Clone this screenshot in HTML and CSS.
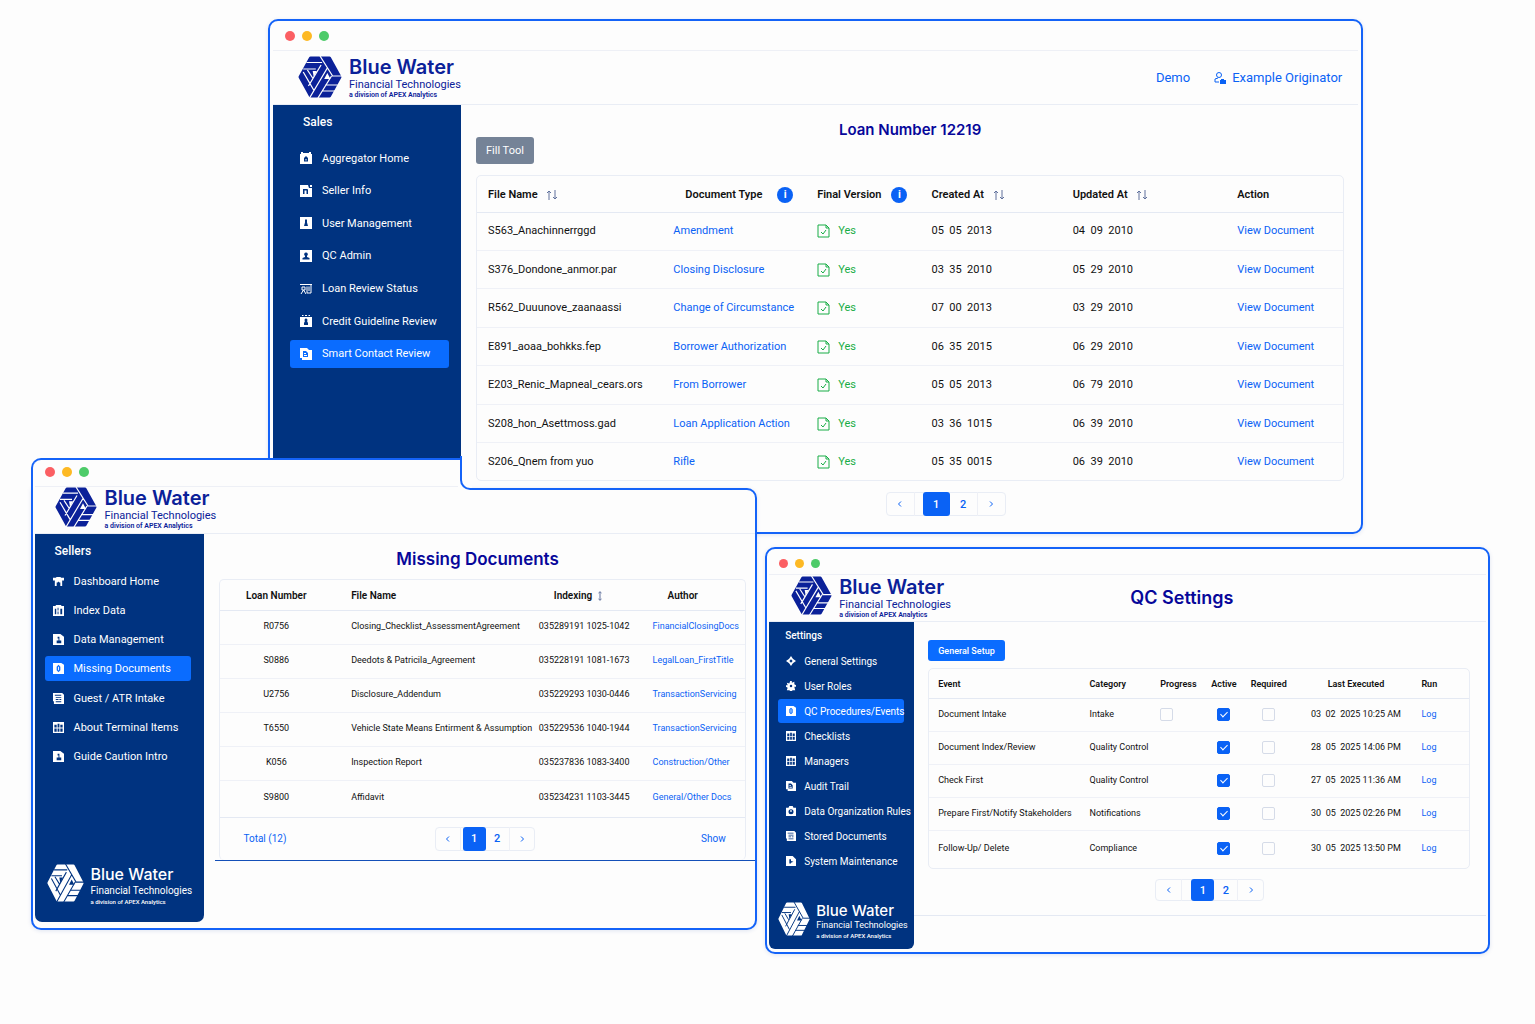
FILE: index.html
```html
<!DOCTYPE html>
<html lang="en">
<head>
    <meta charset="UTF-8">
    <meta name="viewport" content="width=device-width, initial-scale=1">
    <title>Blue Water Financial Technologies</title>
    <link rel="stylesheet" href="styles.css">
</head>
<body>
    <svg class="sprite" aria-hidden="true">
        <symbol id="mark" viewBox="0 0 42 42" preserveAspectRatio="none">
            <path class="mark-fill" d="M2 21L12 2h18l10 19-10 19H12z"/>
            <path class="mark-cut" d="M8 6.500h15M5 13h12M21 0l12 20h9M28 12L11 42M22 9L10 30M32 20L19 42M5 16l10 18M9 14l5 8M23 35h17M26 29h12"/>
            <path class="mark-hole" d="M14 15h4l-3 6zM28 17l3 6h-6z"/>
        </symbol>
        <symbol id="i-bag" viewBox="0 0 12 12"><path fill-rule="evenodd" d="M0 2h1V0h2v1h6V0h2v2h1v10H0zM4 9.500h4V6L6 4 4 6zM5.500 7h1v1.500h-1z"/></symbol>
        <symbol id="i-doc" viewBox="0 0 12 12"><path fill-rule="evenodd" d="M0 0h8l1 3h3v9H0zM3 4v5h1.500V5.500h2V9H8V4.500L7 4zM10 0h2v2h-2z"/></symbol>
        <symbol id="i-user" viewBox="0 0 12 12"><path fill-rule="evenodd" d="M0 0h12v12H0zM5 2.500h2v3l1 3.500H4l1-3.500z"/></symbol>
        <symbol id="i-admin" viewBox="0 0 12 12"><path fill-rule="evenodd" d="M0 0h12v12H0zM6 2.500a1.800 1.800 0 0 0-1 3.300V7L2.500 8v1.500h7V8L7 7V5.800a1.800 1.800 0 0 0-1-3.300z"/></symbol>
        <symbol id="i-loan" viewBox="0 0 12 12"><path class="line" d="M0 1.500h12M2 4h3v3H2zM3.500 7L1 11M3.500 7L6 11M7 3.500V10h4M9 3.500V8M11 2v8"/></symbol>
        <symbol id="i-credit" viewBox="0 0 12 12"><path fill-rule="evenodd" d="M2 0h1.500v1H2zM5 0h2v1H5zM8.500 0H10v1H8.500zM0 2h12v10H0zM6 3.500a1.500 1.500 0 0 0-1 2.600L4 8v2h4V8L7 6.100a1.500 1.500 0 0 0-1-2.600z"/></symbol>
        <symbol id="i-copy" viewBox="0 0 12 12"><path fill-rule="evenodd" d="M0 0h7l2 2h3v10H2v-2H0zM3 3v6h5V5L6 3zM4 5h2v1H4zM4 7h3v1H4z"/></symbol>
        <symbol id="i-home" viewBox="0 0 12 12"><path d="M0 2h3l1-1h4l1 1h3v3h-2v6H8V7H7l-1-1-1 1H4v4H2V5H0z"/></symbol>
        <symbol id="i-index" viewBox="0 0 12 12"><path fill-rule="evenodd" d="M0 1h3V0h6v1h3v11H0zM2 4v6h1.500V4zM5 3v3h1V3zM5 7v3h1V7zM8 4v6h2V4z"/></symbol>
        <symbol id="i-grid" viewBox="0 0 12 12"><path fill-rule="evenodd" d="M0 0h12v12H0zM1.500 3v3H4V3zM5 2v4h2V2zM8 3v3h2.500V3zM1.500 7v3.500H4V7zM5 7v3.500h2V7zM8 7v3.500h2.500V7z"/></symbol>
        <symbol id="i-list" viewBox="0 0 12 12"><path fill-rule="evenodd" d="M0 0h10l2 2v10H1V9H0zM2 2v1h7V2zM3 4.500v1h6v-1zM3 6.500v1h3v-1zM7 6.500v1h2v-1zM3 9v1h6V9z"/></symbol>
        <symbol id="i-missing" viewBox="0 0 12 12"><path fill-rule="evenodd" d="M0 0h9l3 2v10H0zM6 2L4 4v4l2 2 2-2V4zM5.500 4h1v4h-1z"/></symbol>
        <symbol id="i-file" viewBox="0 0 12 12"><path fill-rule="evenodd" d="M0 0h8l4 3v9H0zM5 3v2h1v2H4v3h5V7H7V3z"/></symbol>
        <symbol id="i-gem" viewBox="0 0 12 12"><path fill-rule="evenodd" d="M6 0l2 3 1 1 3 2-3 2-1 1-2 3-2-3-1-1-3-2 3-2 1-1zM6 4L4 6l2 2 2-2z"/></symbol>
        <symbol id="i-gear" viewBox="0 0 12 12"><path fill-rule="evenodd" d="M5 0h2v2l3-1v3l2 1v2h-2l1 4H8l-1 1H5l-1-1H1l1-3-2-1V5h2L1 2l3 1zM6 4.500a1.500 1.500 0 1 0 0 3 1.500 1.500 0 0 0 0-3z"/></symbol>
        <symbol id="i-case" viewBox="0 0 12 12"><path fill-rule="evenodd" d="M0 2h3l1-2h4l1 2h3v10H0zM6 4a3 3 0 1 0 0 6 3 3 0 0 0 0-6zM5 5h2v2H5z"/></symbol>
        <symbol id="i-play" viewBox="0 0 12 12"><path fill-rule="evenodd" d="M0 0h8l4 4v8H0zM4 4v5h2V8l3-1-3-1V4z"/></symbol>
        <symbol id="i-check" viewBox="0 0 13 14"><path class="line" d="M1 1h8l3 3v9H1zM9 1v3h3M4 8l2 2 3-4"/></symbol>
        <symbol id="i-sort" viewBox="0 0 12 10"><path class="line" d="M3 10V1M1 3l2-2 2 2M9 0v9M7 7l2 2 2-2"/></symbol>
        <symbol id="i-updown" viewBox="0 0 6 10"><path class="line" d="M3 1v8M1.500 2L3 .700 4.500 2M1.500 8L3 9.300 4.500 8"/></symbol>
        <symbol id="i-prev" viewBox="0 0 8 8"><path class="line" d="M5 1.500L2.500 4 5 6.500"/></symbol>
        <symbol id="i-next" viewBox="0 0 8 8"><path class="line" d="M3 1.500L5.500 4 3 6.500"/></symbol>
        <symbol id="i-person" viewBox="0 0 12 12"><circle class="line" cx="5" cy="3" r="2.500"/><path class="line" d="M4 6L1 7v3h4"/><path d="M6 8h1V7h3v1h2v4H6z"/></symbol>
    </svg>

    <main class="stage">

        <section class="window window-loan" aria-label="Loan documents">
            <div class="titlebar"><i class="dot red"></i><i class="dot amber"></i><i class="dot green"></i></div>
            <header class="header">
                <a href="#" class="logo">
                    <svg class="logo-mark"><use href="#mark"/></svg>
                    <span class="logo-text"><strong>Blue Water</strong><span>Financial Technologies</span><small>a division of APEX Analytics</small></span>
                </a>
                <nav class="account">
                    <a href="#">Demo</a>
                    <a href="#"><svg class="icon"><use href="#i-person"/></svg>Example Originator</a>
                </nav>
            </header>
            <div class="body">
                <aside class="sidebar">
                    <h2>Sales</h2>
                    <ul class="nav">
                        <li><a href="#"><svg class="icon"><use href="#i-bag"/></svg>Aggregator Home</a></li>
                        <li><a href="#"><svg class="icon"><use href="#i-doc"/></svg>Seller Info</a></li>
                        <li><a href="#"><svg class="icon"><use href="#i-user"/></svg>User Management</a></li>
                        <li><a href="#"><svg class="icon"><use href="#i-admin"/></svg>QC Admin</a></li>
                        <li><a href="#"><svg class="icon"><use href="#i-loan"/></svg>Loan Review Status</a></li>
                        <li><a href="#"><svg class="icon"><use href="#i-credit"/></svg>Credit Guideline Review</a></li>
                        <li><a href="#" class="active"><svg class="icon"><use href="#i-copy"/></svg>Smart Contact Review</a></li>
                    </ul>
                </aside>
                <div class="content">
                    <h1>Loan Number 12219</h1>
                    <button type="button" class="btn btn-gray">Fill Tool</button>
                    <div class="panel">
                        <table>
                            <colgroup><col class="l1"><col class="l2"><col class="l3"><col class="l4"><col class="l5"><col class="l6"></colgroup>
                            <thead>
                                <tr>
                                    <th>File Name <button type="button" class="sort" aria-label="Sort by file name"><svg><use href="#i-sort"/></svg></button></th>
                                    <th class="indent"><span class="with-info">Document Type <button type="button" class="info" aria-label="About document type">i</button></span></th>
                                    <th><span class="with-info">Final Version <button type="button" class="info" aria-label="About final version">i</button></span></th>
                                    <th>Created At <button type="button" class="sort" aria-label="Sort by created date"><svg><use href="#i-sort"/></svg></button></th>
                                    <th>Updated At <button type="button" class="sort" aria-label="Sort by updated date"><svg><use href="#i-sort"/></svg></button></th>
                                    <th>Action</th>
                                </tr>
                            </thead>
                            <tbody>
                                <tr><td>S563_Anachinnerrggd</td><td><a href="#">Amendment</a></td><td><span class="yes"><svg><use href="#i-check"/></svg>Yes</span></td><td class="date">05  05  2013</td><td class="date">04  09  2010</td><td><a href="#">View Document</a></td></tr>
                                <tr><td>S376_Dondone_anmor.par</td><td><a href="#">Closing Disclosure</a></td><td><span class="yes"><svg><use href="#i-check"/></svg>Yes</span></td><td class="date">03  35  2010</td><td class="date">05  29  2010</td><td><a href="#">View Document</a></td></tr>
                                <tr><td>R562_Duuunove_zaanaassi</td><td><a href="#">Change of Circumstance</a></td><td><span class="yes"><svg><use href="#i-check"/></svg>Yes</span></td><td class="date">07  00  2013</td><td class="date">03  29  2010</td><td><a href="#">View Document</a></td></tr>
                                <tr><td>E891_aoaa_bohkks.fep</td><td><a href="#">Borrower Authorization</a></td><td><span class="yes"><svg><use href="#i-check"/></svg>Yes</span></td><td class="date">06  35  2015</td><td class="date">06  29  2010</td><td><a href="#">View Document</a></td></tr>
                                <tr><td>E203_Renic_Mapneal_cears.ors</td><td><a href="#">From Borrower</a></td><td><span class="yes"><svg><use href="#i-check"/></svg>Yes</span></td><td class="date">05  05  2013</td><td class="date">06  79  2010</td><td><a href="#">View Document</a></td></tr>
                                <tr><td>S208_hon_Asettmoss.gad</td><td><a href="#">Loan Application Action</a></td><td><span class="yes"><svg><use href="#i-check"/></svg>Yes</span></td><td class="date">03  36  1015</td><td class="date">06  39  2010</td><td><a href="#">View Document</a></td></tr>
                                <tr><td>S206_Qnem from yuo</td><td><a href="#">Rifle</a></td><td><span class="yes"><svg><use href="#i-check"/></svg>Yes</span></td><td class="date">05  35  0015</td><td class="date">06  39  2010</td><td><a href="#">View Document</a></td></tr>
                            </tbody>
                        </table>
                    </div>
                    <nav class="pager" aria-label="Pages">
                        <button type="button" class="step" aria-label="Previous"><svg><use href="#i-prev"/></svg></button>
                        <button type="button" class="current">1</button>
                        <button type="button">2</button>
                        <button type="button" class="step" aria-label="Next"><svg><use href="#i-next"/></svg></button>
                    </nav>
                </div>
            </div>
        </section>

        <section class="stepped" aria-label="Missing documents">
            <div class="tab">
                <div class="titlebar"><i class="dot red"></i><i class="dot amber"></i><i class="dot green"></i></div>
            </div>
            <div class="window window-missing">
                <header class="header">
                    <a href="#" class="logo">
                        <svg class="logo-mark"><use href="#mark"/></svg>
                        <span class="logo-text"><strong>Blue Water</strong><span>Financial Technologies</span><small>a division of APEX Analytics</small></span>
                    </a>
                </header>
                <div class="body">
                    <aside class="sidebar">
                        <h2>Sellers</h2>
                        <ul class="nav">
                            <li><a href="#"><svg class="icon"><use href="#i-home"/></svg>Dashboard Home</a></li>
                            <li><a href="#"><svg class="icon"><use href="#i-index"/></svg>Index Data</a></li>
                            <li><a href="#"><svg class="icon"><use href="#i-file"/></svg>Data Management</a></li>
                            <li><a href="#" class="active"><svg class="icon"><use href="#i-missing"/></svg>Missing Documents</a></li>
                            <li><a href="#"><svg class="icon"><use href="#i-list"/></svg>Guest / ATR Intake</a></li>
                            <li><a href="#"><svg class="icon"><use href="#i-grid"/></svg>About Terminal Items</a></li>
                            <li><a href="#"><svg class="icon"><use href="#i-file"/></svg>Guide Caution Intro</a></li>
                        </ul>
                        <a href="#" class="logo logo-light">
                            <svg class="logo-mark"><use href="#mark"/></svg>
                            <span class="logo-text"><strong>Blue Water</strong><span>Financial Technologies</span><small>a division of APEX Analytics</small></span>
                        </a>
                    </aside>
                    <div class="content">
                        <div class="content-main">
                            <h1>Missing Documents</h1>
                            <div class="panel">
                                <table>
                                    <colgroup><col class="m1"><col class="m2"><col class="m3"><col class="m4"></colgroup>
                                    <thead>
                                        <tr><th class="center">Loan Number</th><th>File Name</th><th class="indent">Indexing <button type="button" class="sort" aria-label="Sort by indexing"><svg><use href="#i-updown"/></svg></button></th><th class="indent">Author</th></tr>
                                    </thead>
                                    <tbody>
                                        <tr><td class="center">R0756</td><td>Closing_Checklist_AssessmentAgreement</td><td>035289191 1025-1042</td><td><a href="#">FinancialClosingDocs</a></td></tr>
                                        <tr><td class="center">S0886</td><td>Deedots &amp; Patricila_Agreement</td><td>035228191 1081-1673</td><td><a href="#">LegalLoan_FirstTitle</a></td></tr>
                                        <tr><td class="center">U2756</td><td>Disclosure_Addendum</td><td>035229293 1030-0446</td><td><a href="#">TransactionServicing</a></td></tr>
                                        <tr><td class="center">T6550</td><td>Vehicle State Means Entirment &amp; Assumption</td><td>035229536 1040-1944</td><td><a href="#">TransactionServicing</a></td></tr>
                                        <tr><td class="center">K056</td><td>Inspection Report</td><td>035237836 1083-3400</td><td><a href="#">Construction/Other</a></td></tr>
                                        <tr><td class="center">S9800</td><td>Affidavit</td><td>035234231 1103-3445</td><td><a href="#">General/Other Docs</a></td></tr>
                                    </tbody>
                                </table>
                                <footer class="panel-footer">
                                    <a href="#">Total (12)</a>
                                    <nav class="pager" aria-label="Pages">
                                        <button type="button" class="step" aria-label="Previous"><svg><use href="#i-prev"/></svg></button>
                                        <button type="button" class="current">1</button>
                                        <button type="button">2</button>
                                        <button type="button" class="step" aria-label="Next"><svg><use href="#i-next"/></svg></button>
                                    </nav>
                                    <a href="#">Show</a>
                                </footer>
                            </div>
                        </div>
                    </div>
                </div>
            </div>
        </section>

        <section class="window window-qc" aria-label="QC settings">
            <div class="titlebar"><i class="dot red"></i><i class="dot amber"></i><i class="dot green"></i></div>
            <header class="header">
                <a href="#" class="logo">
                    <svg class="logo-mark"><use href="#mark"/></svg>
                    <span class="logo-text"><strong>Blue Water</strong><span>Financial Technologies</span><small>a division of APEX Analytics</small></span>
                </a>
                <h1>QC Settings</h1>
            </header>
            <div class="body">
                <aside class="sidebar">
                    <h2>Settings</h2>
                    <ul class="nav">
                        <li><a href="#"><svg class="icon"><use href="#i-gem"/></svg>General Settings</a></li>
                        <li><a href="#"><svg class="icon"><use href="#i-gear"/></svg>User Roles</a></li>
                        <li><a href="#" class="active"><svg class="icon"><use href="#i-missing"/></svg>QC Procedures/Events</a></li>
                        <li><a href="#"><svg class="icon"><use href="#i-grid"/></svg>Checklists</a></li>
                        <li><a href="#"><svg class="icon"><use href="#i-grid"/></svg>Managers</a></li>
                        <li><a href="#"><svg class="icon"><use href="#i-copy"/></svg>Audit Trail</a></li>
                        <li><a href="#"><svg class="icon"><use href="#i-case"/></svg>Data Organization Rules</a></li>
                        <li><a href="#"><svg class="icon"><use href="#i-list"/></svg>Stored Documents</a></li>
                        <li><a href="#"><svg class="icon"><use href="#i-play"/></svg>System Maintenance</a></li>
                    </ul>
                    <a href="#" class="logo logo-light">
                        <svg class="logo-mark"><use href="#mark"/></svg>
                        <span class="logo-text"><strong>Blue Water</strong><span>Financial Technologies</span><small>a division of APEX Analytics</small></span>
                    </a>
                </aside>
                <div class="content">
                    <div class="content-main">
                        <button type="button" class="btn btn-blue">General Setup</button>
                        <div class="panel">
                            <table>
                                <colgroup><col class="q1"><col class="q2"><col class="q3"><col class="q4"><col class="q5"><col class="q6"><col class="q7"></colgroup>
                                <thead>
                                    <tr><th>Event</th><th>Category</th><th>Progress</th><th class="center">Active</th><th class="center">Required</th><th class="center">Last Executed</th><th>Run</th></tr>
                                </thead>
                                <tbody>
                                    <tr><td>Document Intake</td><td>Intake</td><td><input type="checkbox" aria-label="Document Intake in progress"></td><td class="center"><input type="checkbox" aria-label="Document Intake active" checked></td><td class="center"><input type="checkbox" aria-label="Document Intake required"></td><td class="center date">03  02  2025 10:25 AM</td><td><a href="#">Log</a></td></tr>
                                    <tr><td>Document Index/Review</td><td>Quality Control</td><td></td><td class="center"><input type="checkbox" aria-label="Document Index/Review active" checked></td><td class="center"><input type="checkbox" aria-label="Document Index/Review required"></td><td class="center date">28  05  2025 14:06 PM</td><td><a href="#">Log</a></td></tr>
                                    <tr><td>Check First</td><td>Quality Control</td><td></td><td class="center"><input type="checkbox" aria-label="Check First active" checked></td><td class="center"><input type="checkbox" aria-label="Check First required"></td><td class="center date">27  05  2025 11:36 AM</td><td><a href="#">Log</a></td></tr>
                                    <tr><td>Prepare First/Notify Stakeholders</td><td>Notifications</td><td></td><td class="center"><input type="checkbox" aria-label="Prepare First/Notify Stakeholders active" checked></td><td class="center"><input type="checkbox" aria-label="Prepare First/Notify Stakeholders required"></td><td class="center date">30  05  2025 02:26 PM</td><td><a href="#">Log</a></td></tr>
                                    <tr><td>Follow-Up/ Delete</td><td>Compliance</td><td></td><td class="center"><input type="checkbox" aria-label="Follow-Up/ Delete active" checked></td><td class="center"><input type="checkbox" aria-label="Follow-Up/ Delete required"></td><td class="center date">30  05  2025 13:50 PM</td><td><a href="#">Log</a></td></tr>
                                </tbody>
                            </table>
                        </div>
                        <nav class="pager" aria-label="Pages">
                            <button type="button" class="step" aria-label="Previous"><svg><use href="#i-prev"/></svg></button>
                            <button type="button" class="current">1</button>
                            <button type="button">2</button>
                            <button type="button" class="step" aria-label="Next"><svg><use href="#i-next"/></svg></button>
                        </nav>
                    </div>
                </div>
            </div>
        </section>

    </main>
</body>
</html>
```
FILE: styles.css
```css
* {
    box-sizing: border-box;
}

body {
    margin: 0;
    background-color: #fdfdfd;
    font-family: Roboto, "Liberation Sans", sans-serif;
    color: #111;
}

.sprite {
    position: absolute;
    width: 0;
    height: 0;
}

a {
    color: #0a62f5;
    text-decoration: none;
}

button {
    font: inherit;
    cursor: pointer;
}

h1, h2, ul {
    margin: 0;
    padding: 0;
}

h1 {
    color: #07079a;
    font-family: Inter, "Liberation Sans", sans-serif;
    font-weight: 600;
    text-align: center;
}

svg {
    display: block;
    fill: currentColor;
}

.line {
    fill: none;
    stroke: currentColor;
    stroke-width: 1;
}

/* windows */

.stage {
    position: relative;
    min-height: 100vh;
    overflow: hidden;
}

.window {
    background-color: #fdfdfd;
    border: 2px solid #1463f8;
    border-radius: 10px;
    box-shadow: 0 1px 4px rgba(20, 60, 160, 0.12);
}

.window-loan {
    position: absolute;
    top: 19px;
    left: 17.46%;
    width: 71.35%;
    padding: 0 3px 2px;
}

.stepped {
    position: absolute;
    top: 458px;
    left: 2.05%;
    width: 47.25%;
}

.window-qc {
    position: absolute;
    top: 547px;
    left: 49.85%;
    width: 47.25%;
    padding: 0 2px 3px;
}

.titlebar {
    display: flex;
    align-items: center;
    gap: 7px;
    height: 30px;
    padding-left: 12px;
    border-bottom: 1px solid #eef0f6;
}

.dot {
    width: 10px;
    height: 10px;
    border-radius: 50%;
}

.red { background-color: #fb5f63; }
.amber { background-color: #fdb924; }
.green { background-color: #4dcb69; }

.header {
    display: flex;
    align-items: center;
    height: 54px;
    border-bottom: 1px solid #e9edf5;
}

.body {
    display: flex;
}

.content {
    flex: 1;
    min-width: 0;
}

/* top-left tab of the stepped window */

.tab {
    position: relative;
    z-index: 1;
    width: 429px;
    height: 32px;
    background-color: #fdfdfd;
    border: solid #1463f8;
    border-width: 2px 0 0 2px;
    border-radius: 10px 0 0 0;
}

/* inner corner where the tab meets the body */
.tab::before,
.tab::after {
    content: "";
    position: absolute;
    left: 100%;
    bottom: 0;
    width: 10px;
    height: 10px;
    background-color: #fdfdfd;
}

.tab::after {
    height: 32px;
    border: solid #1463f8;
    border-width: 0 0 2px 2px;
    border-radius: 0 0 0 10px;
}

.tab .titlebar {
    height: 27px;
    margin: 0 2px;
    padding: 0 0 3px 10px;
}

.window-missing {
    margin-top: -2px;
    border-radius: 0 10px 10px 10px;
    padding: 0 0 6px 2px;
}

/* logo */

.logo {
    display: flex;
    gap: 7px;
    color: #0b2199;
    --cut: #fdfdfd;
}

.logo-mark {
    flex: none;
    width: 44px;
    height: 42px;
}

.mark-fill {
    stroke: currentColor;
    stroke-width: 3;
    stroke-linejoin: round;
}

.mark-cut {
    fill: none;
    stroke: var(--cut);
    stroke-width: 1.2;
}

.mark-hole {
    fill: var(--cut);
}

.logo-text {
    display: flex;
    flex-direction: column;
    white-space: nowrap;
    font-size: 11px;
    line-height: 13px;
}

.logo-text strong {
    font-family: Inter, "Liberation Sans", sans-serif;
    font-size: 20px;
    line-height: 22px;
    font-weight: 600;
}

.logo-text small {
    font-size: 7px;
    line-height: 9px;
    font-weight: 600;
}

.logo-light {
    color: #fff;
    --cut: #003380;
}

.window-loan .logo {
    margin-left: 25px;
}

.window-missing .header .logo {
    margin-left: 20px;
}

.window-missing .header .logo-mark {
    width: 42px;
    height: 40px;
}

.window-qc .header .logo {
    margin-left: 22px;
}

.window-qc .header .logo-mark {
    width: 41px;
    height: 39px;
}

.account {
    display: flex;
    gap: 24px;
    margin-left: auto;
    padding-right: 16px;
    font-size: 13px;
}

.account a {
    display: flex;
    align-items: center;
    gap: 6px;
}

/* sidebars */

.sidebar {
    display: flex;
    flex-direction: column;
    flex: none;
    width: 188px;
    padding: 9px 12px 90px 17px;
    background-color: #003380;
    color: #fff;
}

.sidebar h2 {
    padding-left: 13px;
    font-size: 12px;
    line-height: 16px;
    font-weight: 500;
}

.nav {
    display: flex;
    flex-direction: column;
    justify-content: space-between;
    height: 224px;
    margin-top: 14px;
    list-style: none;
}

.nav a {
    display: flex;
    align-items: center;
    gap: 10px;
    height: 28px;
    padding: 0 10px;
    border-radius: 3px;
    color: #fff;
    font-size: 11px;
    white-space: nowrap;
}

.nav .active {
    background-color: #0a6cff;
}

.icon {
    flex: none;
    width: 12px;
    height: 12px;
}

.window-missing .sidebar {
    width: 169px;
    padding: 9px 13px 16px 10px;
    border-radius: 0 0 7px 7px;
}

.window-missing .sidebar h2 {
    padding-left: 9px;
}

.window-missing .nav {
    height: 200px;
    margin-top: 10px;
}

.window-missing .nav a {
    gap: 9px;
    height: 25px;
    padding: 0 8px;
}

.window-missing .nav .icon {
    width: 11px;
    height: 11px;
}

.window-qc .sidebar {
    width: 145px;
    padding: 6px 10px 9px 9px;
    border-radius: 0 0 6px 6px;
}

.window-qc .sidebar h2 {
    padding-left: 7px;
    font-size: 10px;
}

.window-qc .nav {
    margin-top: 5px;
}

.window-qc .nav a {
    gap: 8px;
    height: 24px;
    padding: 0 8px;
    font-size: 10px;
}

.window-qc .nav .icon {
    width: 10px;
    height: 10px;
}

.sidebar .logo {
    gap: 6px;
    margin: auto 0 0 2px;
}

.sidebar .logo-mark {
    width: 37px;
    height: 38px;
}

.sidebar .logo-text {
    font-size: 10px;
}

.sidebar .logo-text strong {
    font-size: 16px;
    line-height: 20px;
    font-weight: 500;
}

.sidebar .logo-text small {
    font-size: 6px;
    font-weight: 500;
}

.window-qc .sidebar .logo {
    margin-left: 0;
}

.window-qc .sidebar .logo-mark {
    width: 32px;
    height: 34px;
}

.window-qc .sidebar .logo-text {
    font-size: 9px;
    line-height: 11px;
}

.window-qc .sidebar .logo-text strong {
    font-size: 15px;
    line-height: 18px;
}

/* tables */

.panel {
    border: 1px solid #e9edf5;
    border-radius: 5px;
}

table {
    width: 100%;
    table-layout: fixed;
    border-collapse: collapse;
    font-size: 9px;
    line-height: 14px;
}

th, td {
    padding: 0 0 0 11px;
    text-align: left;
    white-space: nowrap;
}

th {
    padding-top: 2px;
    font-weight: 600;
    border-bottom: 1px solid #e4e9f3;
}

td {
    border-bottom: 1px solid #eff1f7;
}

tbody tr:last-child td {
    border-bottom: 0;
}

.center {
    padding-left: 0;
    text-align: center;
}

.date {
    white-space: pre;
}

.sort {
    display: inline-block;
    margin-left: 6px;
    padding: 0;
    border: 0;
    background: none;
    color: #60719c;
    vertical-align: middle;
}

.sort svg {
    width: 12px;
    height: 10px;
}

.with-info {
    display: flex;
    align-items: center;
    justify-content: space-between;
    padding-right: 13px;
}

.info {
    width: 16px;
    height: 16px;
    padding: 0;
    border: 0;
    border-radius: 50%;
    background-color: #0a62f5;
    color: #fff;
    font-size: 11px;
    line-height: 16px;
    font-weight: 700;
}

.yes {
    display: flex;
    align-items: center;
    gap: 8px;
    color: #18ad46;
}

.yes svg {
    width: 13px;
    height: 14px;
}

input[type="checkbox"] {
    appearance: none;
    display: inline-grid;
    place-items: center;
    width: 13px;
    height: 13px;
    margin: 0;
    border: 1px solid #d5dbe8;
    border-radius: 2px;
    vertical-align: middle;
}

input[type="checkbox"]:checked {
    border-color: #0a62f5;
    background-color: #0a62f5;
}

input[type="checkbox"]:checked::after {
    content: "";
    width: 3px;
    height: 6px;
    margin-bottom: 2px;
    border: solid #fff;
    border-width: 0 1px 1px 0;
    transform: rotate(45deg);
}

/* buttons */

.btn {
    display: block;
    padding: 0 10px;
    border: 0;
    border-radius: 3px;
    color: #fff;
}

.btn-gray {
    height: 27px;
    background-color: #758397;
    font-size: 11px;
}

.btn-blue {
    height: 21px;
    background-color: #0a6cff;
    font-size: 9px;
    font-weight: 500;
}

.pager {
    display: flex;
    align-items: center;
    width: max-content;
    height: 24px;
    border: 1px solid #e9edf5;
    border-radius: 4px;
    font-size: 11px;
    font-weight: 500;
}

.pager button {
    display: flex;
    align-items: center;
    justify-content: center;
    width: 27px;
    height: 24px;
    padding: 0;
    border: 0;
    background: none;
    color: #0a62f5;
}

.pager .step {
    width: 28px;
}

.pager .step:first-child {
    border-right: 1px solid #eef0f6;
    margin-right: 8px;
}

.pager .step:last-child {
    border-left: 1px solid #eef0f6;
}

.pager .current {
    border-radius: 3px;
    background-color: #0a62f5;
    color: #fff;
}

.pager svg {
    width: 8px;
    height: 8px;
}

/* loan window */

.window-loan .content {
    padding: 15px 14px 14px 15px;
}

.window-loan h1 {
    font-size: 15px;
    line-height: 20px;
}

.window-loan .btn {
    margin: -3px 0 11px;
}

.window-loan table {
    height: 304px;
    font-size: 11px;
}

.window-loan th {
    height: 36px;
}

.window-loan .indent {
    padding-left: 23px;
}

.window-loan .pager {
    margin: 11px 39% 0 auto;
}

.l1 { width: 21.4%; }
.l2 { width: 16.6%; }
.l3 { width: 13.2%; }
.l4 { width: 16.3%; }
.l5 { width: 19%; }
.l6 { width: 13.5%; }

/* missing documents window */

.window-missing .header {
    position: relative;
    z-index: 2;
    height: 44px;
    padding-bottom: 5px;
}

.window-missing .content {
    padding: 0 0 61px 11px;
}

.window-missing .content-main {
    padding: 14px 9px 0 4px;
    border-bottom: 1px solid #1450b8;
}

.window-missing h1 {
    font-size: 17px;
    line-height: 22px;
    padding-right: 10px;
}

.window-missing .panel {
    margin-top: 9px;
    border-bottom: 0;
}

.window-missing table {
    border-bottom: 1px solid #e4e9f3;
}

.window-missing th {
    height: 30px;
    font-size: 10px;
}

.window-missing td {
    height: 34px;
    padding-bottom: 2px;
}

.window-missing tbody tr:last-child td {
    height: 37px;
    padding-bottom: 4px;
}

.window-missing th:nth-child(2),
.window-missing td:nth-child(2) {
    padding-left: 19px;
}

.window-missing th:nth-child(n+3),
.window-missing td:nth-child(n+3) {
    padding-left: 9px;
}

.window-missing th.indent {
    padding-left: 24px;
}

.window-missing .center {
    padding-left: 0;
}

.window-missing .sort {
    margin-left: 2px;
}

.window-missing .sort svg {
    width: 6px;
}

.m1 { width: 21.3%; }
.m2 { width: 37.7%; }
.m3 { width: 21.7%; }
.m4 { width: 19.3%; }

.panel-footer {
    display: grid;
    grid-template-columns: 1fr auto 1fr;
    align-items: center;
    height: 42px;
    padding: 0 19px 0 23px;
    font-size: 10px;
}

.panel-footer > :last-child {
    text-align: right;
}

.window-missing .pager button {
    width: 23px;
}

.window-missing .pager .step {
    width: 25px;
}

.window-missing .pager .step:first-child {
    margin-right: 2px;
}

/* qc settings window */

.window-qc .titlebar {
    height: 26px;
    padding: 3px 0 0 10px;
}

.window-qc .dot {
    width: 9px;
    height: 9px;
}

.window-qc .header {
    height: 47px;
}

.window-qc h1 {
    margin-left: 25%;
    font-size: 18px;
    line-height: 22px;
}

.window-qc .content {
    padding-bottom: 33px;
}

.window-qc .content-main {
    padding: 18px 16px 14px 14px;
    border-bottom: 1px solid #e4e9f3;
}

.window-qc .panel {
    margin-top: 7px;
}

.window-qc th {
    height: 29px;
}

.window-qc td {
    height: 33px;
    padding-bottom: 2px;
}

.window-qc tbody tr:last-child td {
    height: 38px;
}

.window-qc th,
.window-qc td {
    padding-left: 9px;
}

.window-qc .center {
    padding-left: 0;
}

.window-qc th:last-child,
.window-qc td:last-child {
    padding-left: 6px;
}

.window-qc .pager {
    height: 22px;
    margin: 10px 38% 0 auto;
}

.window-qc .pager button {
    width: 23px;
    height: 22px;
}

.window-qc .pager .step {
    width: 26px;
}

.window-qc .pager .step:first-child {
    margin-right: 9px;
}

.q1 { width: 28%; }
.q2 { width: 13.1%; }
.q3 { width: 10.3%; }
.q4 { width: 6.3%; }
.q5 { width: 10.3%; }
.q6 { width: 22%; }
.q7 { width: 10%; }
```
